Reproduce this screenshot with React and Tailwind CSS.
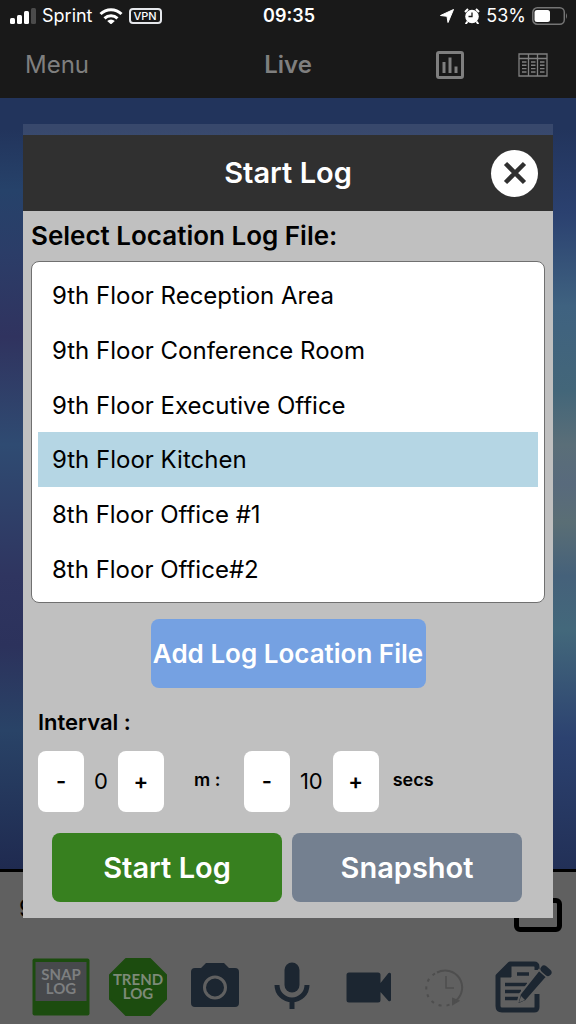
import { useState } from 'react';

const LOCATIONS = [
  '9th Floor Reception Area',
  '9th Floor Conference Room',
  '9th Floor Executive Office',
  '9th Floor Kitchen',
  '8th Floor Office #1',
  '8th Floor Office#2',
];

function StatusBar() {
  return (
    <div className="grid h-8 grid-cols-3 items-center pr-2 pl-2.5 text-lg text-white">
      <div className="flex items-center gap-1.5">
        <svg className="h-4 w-[26px] shrink-0" viewBox="0 0 26 16" fill="currentColor">
          <rect x="0" y="10" width="5" height="6" rx="1.5" />
          <rect x="7" y="7" width="5" height="9" rx="1.5" />
          <rect x="14" y="3" width="5" height="13" rx="1.5" />
          <rect x="21" y="0" width="5" height="16" rx="1.5" fill="#4b4b4b" />
        </svg>
        <span>Sprint</span>
        <svg className="h-4 w-6 shrink-0" viewBox="0 0 24 16" fill="none" stroke="currentColor" strokeWidth="3">
          <path d="M1.5 6a15 15 0 0 1 21 0M5.5 10.3a9.5 9.5 0 0 1 13 0" />
          <path d="M8.2 13a5.4 5.4 0 0 1 7.6 0L12 16.4z" fill="currentColor" stroke="none" />
        </svg>
        <span className="rounded border-2 border-gray-200 px-[3px] text-[11px] leading-3 font-medium">VPN</span>
      </div>
      <div className="text-center font-semibold">09:35</div>
      <div className="flex items-center justify-end gap-1.5">
        <svg className="mr-1 size-3.5 shrink-0" viewBox="0 0 14 14" fill="currentColor">
          <path d="M13.5 .5 8 13.5 7 7.3 .5 6.5z" stroke="currentColor" strokeLinejoin="round" />
        </svg>
        <svg className="size-4 shrink-0" viewBox="0 0 16 16" fill="currentColor">
          <circle cx="8" cy="8.5" r="6.8" />
          <path d="M3.5 13.5 1.7 16M12.5 13.5l1.8 2.5M1 4l3-3M15 4l-3-3" stroke="currentColor" strokeWidth="2" />
          <path d="M8 4.5v4H4.5" fill="none" stroke="#191919" strokeWidth="1.3" />
        </svg>
        <span>53%</span>
        <svg className="h-[18px] w-9 shrink-0" viewBox="0 0 36 18" fill="none">
          <rect x="0.8" y="0.8" width="31.5" height="16.4" rx="4.5" stroke="#757575" strokeWidth="1.5" />
          <rect x="2.5" y="3" width="15.5" height="12" rx="2.5" fill="#fff" />
          <path d="M34 6q2 3 0 6z" fill="#757575" />
        </svg>
      </div>
    </div>
  );
}

function NavBar() {
  return (
    <nav className="grid h-[66px] grid-cols-3 items-center px-[25px] text-2xl text-[#7f7f7f]">
      <button className="text-left">Menu</button>
      <h1 className="text-center font-semibold">Live</h1>
      <div className="flex items-center justify-end gap-[54px] pr-[3px]">
        <button aria-label="Chart">
          <svg className="size-7" viewBox="0 0 28 28" fill="none" stroke="currentColor">
            <rect x="1.5" y="1.5" width="25" height="25" rx="1.5" strokeWidth="3" />
            <path d="M8 11v11M14 6.5V22M20 15.5V22" strokeWidth="3" />
          </svg>
        </button>
        <button aria-label="Table">
          <svg className="h-6 w-[30px]" viewBox="0 0 30 24" fill="none" stroke="currentColor">
            <path d="M1 1h28v22H1zM1 5.5h28M10.5 1v22M19.5 1v22" strokeWidth="1.3" />
            <path d="M4 9h4.5M4 12.3h4.5M4 15.6h4.5M4 19h4.5M13 9h4.5M13 12.3h4.5M13 15.6h4.5M13 19h4.5M22 9h4.5M22 12.3h4.5M22 15.6h4.5M22 19h4.5" strokeWidth="1.4" />
          </svg>
        </button>
      </div>
    </nav>
  );
}

function Toolbar() {
  return (
    <footer className="h-[155px] border-t-[3px] border-black bg-[#606060]">
      <div className="flex h-[86px] items-center justify-between pr-3.5 pl-[19px] text-2xl text-black">
        <span className="pb-3">9th Floor Kitchen</span>
        <span className="h-[34px] w-12 rounded-md border-[5px] border-black" />
      </div>
      <div className="grid grid-cols-7 justify-items-center pr-[15px] pl-[23px] text-[#1c2631]">
        <button aria-label="Snap log">
          <svg className="size-[58px]" viewBox="0 0 58 58">
            <rect x="0.5" y="0.5" width="57" height="57" rx="2" fill="#1c4c0f" />
            <rect x="3.5" y="4" width="51" height="39" fill="#47494c" />
            <g fill="#7d7f80" fontFamily="Lato, sans-serif" fontSize="15" fontWeight="700" textAnchor="middle">
              <text x="29" y="22">SNAP</text>
              <text x="29" y="36">LOG</text>
            </g>
          </svg>
        </button>
        <button aria-label="Trend log">
          <svg className="size-[58px]" viewBox="0 0 58 58">
            <path d="M17 1h24l16 16v24L41 57H17L1 41V17z" fill="#1c4c0f" stroke="#1c4c0f" strokeWidth="2" strokeLinejoin="round" />
            <g fill="#7d8a78" fontFamily="Lato, sans-serif" fontSize="15" fontWeight="700" textAnchor="middle">
              <text x="29" y="27">TREND</text>
              <text x="29" y="41">LOG</text>
            </g>
          </svg>
        </button>
        <button aria-label="Camera">
          <svg className="size-[58px]" viewBox="0 0 58 58" fill="currentColor">
            <path d="M20 5h18l5 5h6a4 4 0 0 1 4 4v31a4 4 0 0 1-4 4H9a4 4 0 0 1-4-4V14a4 4 0 0 1 4-4h6z" />
            <circle cx="29" cy="29.5" r="10.5" fill="none" stroke="#606060" strokeWidth="3" />
          </svg>
        </button>
        <button aria-label="Microphone">
          <svg className="size-[58px]" viewBox="0 0 58 58" fill="none" stroke="currentColor">
            <path d="M29 12v15" strokeWidth="15" strokeLinecap="round" />
            <path d="M14 27a15 15 0 0 0 30 0M29 42v9" strokeWidth="5" />
          </svg>
        </button>
        <button aria-label="Video">
          <svg className="size-[58px]" viewBox="0 0 58 58" fill="currentColor">
            <path d="M9 14.5h29a2.500 2.500 0 0 1 2.500 2.500v8l8-10q2-1 2.500 1v26q-.5 2-2.500 1l-8-9V42a2.500 2.500 0 0 1-2.500 2.500H9A2.500 2.500 0 0 1 6.500 42V17A2.500 2.500 0 0 1 9 14.500z" />
          </svg>
        </button>
        <button aria-label="History" className="text-[#4e4e4e]">
          <svg className="size-[58px]" viewBox="0 0 58 58" fill="none" stroke="currentColor" strokeWidth="2">
            <path d="M20 14.5a17 17 0 0 1 19 28" />
            <path d="M18 15.5a17 17 0 0 0 17 30" strokeDasharray="3 5" />
            <path d="M29 18v12h8" strokeWidth="1.5" />
            <path d="m36 41 5 2-5 3z" fill="currentColor" />
          </svg>
        </button>
        <button aria-label="Notes">
          <svg className="size-[58px]" viewBox="0 0 58 58" fill="none" stroke="currentColor">
            <path d="M43 12V9q0-3-3-3H16L4 18v30q0 4 4 4h32q3 0 3-3V36" strokeWidth="5" strokeLinejoin="round" />
            <path d="M17 5v14H3z" fill="currentColor" />
            <path d="M23 16h12M11 26.5h22M11 33.5h16M11 40.5h13" strokeWidth="3.5" />
            <path d="m45 12 8 7-21 24-9 4 3-11z" fill="currentColor" stroke="#606060" strokeWidth="2" />
            <path d="m27 38 4 4-6 2.500z" fill="#606060" stroke="none" />
            <path d="m50 11 4 3.500" strokeWidth="7" strokeLinecap="round" />
          </svg>
        </button>
      </div>
    </footer>
  );
}

function Stepper({ label, value, onChange }) {
  const button = 'h-[61px] w-[46px] rounded-lg bg-white pb-px text-[22px] font-semibold';

  return (
    <div role="group" aria-label={label} className="flex items-center">
      <button className={button} aria-label={`Decrease ${label}`} onClick={() => onChange(Math.max(0, value - 1))}>-</button>
      <output className="min-w-[33px] px-2.5 text-center text-[22px]">{value}</output>
      <button className={button} aria-label={`Increase ${label}`} onClick={() => onChange(value + 1)}>+</button>
    </div>
  );
}

function StartLogDialog() {
  const [selected, setSelected] = useState(3);
  const [minutes, setMinutes] = useState(0);
  const [seconds, setSeconds] = useState(10);

  return (
    <div role="dialog" aria-labelledby="dialog-title" className="border-t-[11px] border-white/10 text-black">
      <header className="grid h-[76px] grid-cols-[1fr_auto_1fr] items-center bg-[#303030] px-[15px] text-white">
        <h2 id="dialog-title" className="col-start-2 text-[29px] font-semibold">Start Log</h2>
        <button aria-label="Close" className="flex size-[47px] items-center justify-center justify-self-end rounded-full bg-white text-[#303030]">
          <svg className="size-6" viewBox="0 0 24 24" fill="none" stroke="currentColor" strokeWidth="4.5">
            <path d="m2.500 2.500 19 19M21.500 2.500l-19 19" />
          </svg>
        </button>
      </header>

      <div className="bg-[#c0c0c0] px-2 pb-4">
        <h3 id="list-title" className="h-[50px] text-[26px] leading-[50px] font-semibold">Select Location Log File:</h3>
        <div role="listbox" aria-labelledby="list-title" className="grid h-[342px] grid-rows-6 rounded-lg border border-[#707070] bg-white p-1.5">
          {LOCATIONS.map((name, i) => (
            <button
              key={name}
              role="option"
              aria-selected={i === selected}
              onClick={() => setSelected(i)}
              className={`px-3.5 pt-0.5 text-left text-2xl ${i === selected ? 'bg-[#b5d6e4]' : ''}`}
            >
              {name}
            </button>
          ))}
        </div>

        <div className="flex justify-center py-4">
          <button className="h-[69px] w-[275px] rounded-lg bg-[#75a1e2] text-[26px] font-semibold whitespace-nowrap text-white">
            Add Log Location File
          </button>
        </div>

        <h3 className="px-[7px] pt-[3px] text-[22px] leading-[30px] font-semibold">Interval :</h3>
        <div className="flex items-center px-[7px] pt-3.5">
          <Stepper label="minutes" value={minutes} onChange={setMinutes} />
          <span className="w-20 pb-1 pl-[30px] text-lg font-semibold">m :</span>
          <Stepper label="seconds" value={seconds} onChange={setSeconds} />
          <span className="pb-1 pl-3.5 text-lg font-semibold">secs</span>
        </div>

        <div className="grid grid-cols-2 gap-2.5 pt-[21px] pr-[23px] pl-[21px] text-[29px] font-semibold text-white">
          <button className="h-[69px] rounded-lg bg-[#37801f]">Start Log</button>
          <button className="h-[69px] rounded-lg bg-[#748090]">Snapshot</button>
        </div>
      </div>
    </div>
  );
}

export default function App() {
  return (
    <div className="relative flex min-h-screen flex-col bg-[#191919] font-[Inter,'Liberation_Sans',sans-serif]">
      <StatusBar />
      <NavBar />
      <main className="flex flex-1">
        <div className="flex-1 bg-[linear-gradient(#22345c,#22345c_4%,#26426a_12%,#2b3d68_20%,#30335f_31%,#2f4b72_45%,#2f3560_62%,#2c325c_71%,#294367_82%,#1f2a50)]" />
        <div className="flex-1 bg-[linear-gradient(#22345c,#22345c_4%,#2b4170_15%,#3f6280_27%,#436679_38%,#5a6e78_45%,#586a7c_50%,#5a6e75_55%,#45617a_62%,#43687b_69%,#2c4270_83%,#223057)]" />
      </main>
      <Toolbar />
      <div className="absolute inset-x-0 top-[124px] px-[23px]">
        <StartLogDialog />
      </div>
    </div>
  );
}
